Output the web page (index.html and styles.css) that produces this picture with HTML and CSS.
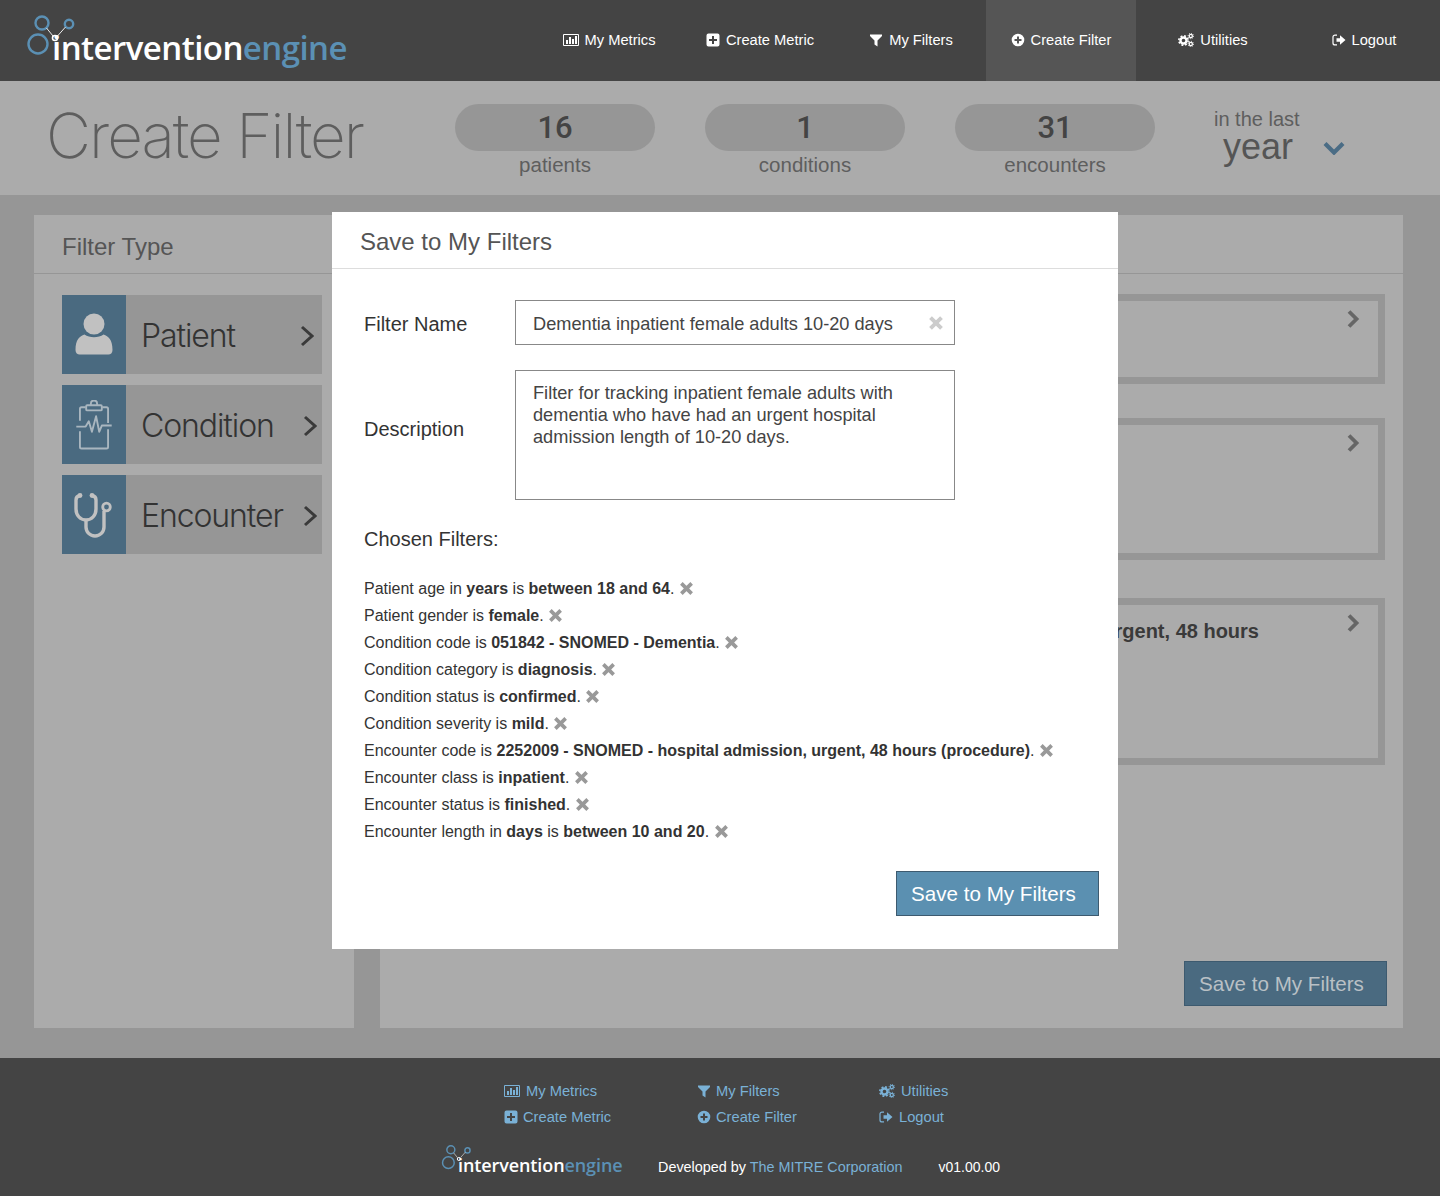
FILE: index.html
```html
<!DOCTYPE html>
<html lang="en">
<head>
  <meta charset="UTF-8">
  <title>Intervention Engine - Create Filter</title>
  <link rel="stylesheet" href="styles.css">
</head>
<body>

<svg class="sprites" width="0" height="0">
  <symbol id="i-metrics" viewBox="0 0 16 14"><path fill="none" stroke="currentColor" d="M.5 1.5h15v11H.5z"/><path fill="currentColor" d="M3 7h2v4H3zM6 4h2v7H6zM9 6h2v5H9zM12 3h2v8h-2z"/></symbol>
  <symbol id="i-plus-square" viewBox="0 0 14 14"><path fill="currentColor" fill-rule="evenodd" d="M2.500 .5h9a2 2 0 0 1 2 2v9a2 2 0 0 1-2 2h-9a2 2 0 0 1-2-2v-9a2 2 0 0 1 2-2zM6 3v3H3v2h3v3h2V8h3V6H8V3z"/></symbol>
  <symbol id="i-filter" viewBox="0 0 14 14"><path fill="currentColor" d="M1 1.500h12v1.500L8.500 7.500v6L5.500 11.500v-4L1 3z"/></symbol>
  <symbol id="i-plus-circle" viewBox="0 0 14 14"><path fill="currentColor" fill-rule="evenodd" d="M7 .7a6.300 6.300 0 1 1 0 12.600A6.300 6.300 0 0 1 7 .7zM6 3.500V6H3.500v2H6v2.500h2V8h2.500V6H8V3.500z"/></symbol>
  <symbol id="i-cogs" viewBox="0 0 16 14"><g fill="none" stroke="currentColor"><circle cx="5.500" cy="7.500" r="3" stroke-width="2.400"/><circle cx="5.500" cy="7.500" r="4.700" stroke-width="1.600" stroke-dasharray="1.900 1.800"/><circle cx="12.800" cy="3" r="1.600" stroke-width="1.300"/><circle cx="12.800" cy="3" r="2.700" stroke-width="1" stroke-dasharray="1 1.100"/><circle cx="12.800" cy="11" r="1.600" stroke-width="1.300"/><circle cx="12.800" cy="11" r="2.700" stroke-width="1" stroke-dasharray="1 1.100"/></g></symbol>
  <symbol id="i-logout" viewBox="0 0 14 14"><path fill="none" stroke="currentColor" stroke-width="1.200" d="M5 2.100H3A2 2 0 0 0 1 4.100v5.800a2 2 0 0 0 2 2h2"/><path fill="currentColor" d="M4.500 5.200H8V2.300L13.500 7 8 11.700V8.800H4.500z"/></symbol>
  <symbol id="i-x" viewBox="0 0 14 14"><path fill="none" stroke="currentColor" stroke-width="3.400" d="M2.200 2.200l9.600 9.600M11.800 2.200l-9.600 9.600"/></symbol>
  <symbol id="i-logo" viewBox="0 0 52 52"><g fill="none"><circle cx="16" cy="11" r="6.500" stroke-width="2.400" stroke="currentColor"/><circle cx="43" cy="12" r="4.200" stroke-width="2.400" stroke="currentColor"/><circle cx="12" cy="32" r="9.500" stroke-width="2.400" stroke="currentColor"/><path stroke="#fff" stroke-width=".9" d="M20.500 16l6.500 8M39.500 15l-8 9"/><circle cx="29" cy="26" r="2.500" stroke-width="1.600" stroke="#fff"/></g></symbol>
</svg>

<nav class="topnav">
  <a class="brand">
    <svg class="brand-mark"><use href="#i-logo"/></svg>
    <span class="brand-text">intervention<span class="brand-blue">engine</span></span>
  </a>
  <div class="menu">
    <a class="menu-item"><svg class="ico ico-wide"><use href="#i-metrics"/></svg>My Metrics</a>
    <a class="menu-item"><svg class="ico"><use href="#i-plus-square"/></svg>Create Metric</a>
    <a class="menu-item"><svg class="ico"><use href="#i-filter"/></svg>My Filters</a>
    <a class="menu-item active"><svg class="ico"><use href="#i-plus-circle"/></svg>Create Filter</a>
    <a class="menu-item"><svg class="ico ico-wide"><use href="#i-cogs"/></svg>Utilities</a>
    <a class="menu-item"><svg class="ico"><use href="#i-logout"/></svg>Logout</a>
  </div>
</nav>

<header class="page-head">
  <h1>Create Filter</h1>
  <div class="stat"><div class="pill">16</div><div class="stat-label">patients</div></div>
  <div class="stat"><div class="pill">1</div><div class="stat-label">conditions</div></div>
  <div class="stat"><div class="pill">31</div><div class="stat-label">encounters</div></div>
  <div class="period">
    <div class="period-small">in the last</div>
    <div class="period-big">year <svg class="period-arrow" viewBox="0 0 22 14"><path fill="none" stroke="currentColor" stroke-width="4.200" d="M2 2.500l9 9 9-9"/></svg></div>
  </div>
</header>

<main class="content">
  <section class="panel panel-left">
    <div class="panel-title">Filter Type</div>
    <div class="type-list">
      <div class="type-row">
        <div class="type-icon">
          <svg width="40" height="44" viewBox="0 0 40 44"><circle cx="20" cy="11" r="10.500" fill="#c1c1c1"/><path fill="#c1c1c1" d="M1.500 37c0-10 4-14 9-15.500 5 3.500 14 3.500 19 0 5 1.500 9 5.500 9 15.500 0 3-2 4.500-4 4.500H5.500c-2 0-4-1.500-4-4.500z"/></svg>
        </div>
        <span class="type-name">Patient</span>
        <svg class="type-arrow arrow-patient" viewBox="0 0 14 22"><path d="M2 2l10 9-10 9"/></svg>
      </div>
      <div class="type-row">
        <div class="type-icon">
          <svg width="38" height="50" viewBox="0 0 36 48" fill="none" stroke="#a9b6bf" stroke-width="1.800" stroke-linejoin="round"><path d="M10 7H6a1.500 1.500 0 0 0-1.500 1.500V20M26 7h4a1.500 1.500 0 0 1 1.500 1.500V22M4.500 30v15a1.500 1.500 0 0 0 1.500 1.500h24a1.500 1.500 0 0 0 1.500-1.500V28"/><path d="M11.500 5h13a1 1 0 0 1 1 1v3a1 1 0 0 1-1 1h-13a1 1 0 0 1-1-1V6a1 1 0 0 1 1-1zM15 5V3.500a3 3 0 0 1 6 0V5"/><path d="M1 25.500h9l3-5 3 10 4-15 3 15 2.500-6H35"/></svg>
        </div>
        <span class="type-name">Condition</span>
        <svg class="type-arrow" viewBox="0 0 14 22"><path d="M2 2l10 9-10 9"/></svg>
      </div>
      <div class="type-row">
        <div class="type-icon">
          <svg width="40" height="46" viewBox="0 0 40 46" fill="none" stroke="#c1c1c1" stroke-width="3.400"><path d="M6 3.500C3 4 2 5.500 2 8v9c0 6 4 11 10 11s10-5 10-11V8c0-2.500-1-4-4-4.500"/><circle cx="6" cy="3.500" r="2.400" fill="#c1c1c1" stroke="none"/><circle cx="18" cy="3.500" r="2.400" fill="#c1c1c1" stroke="none"/><path d="M12 28v7c0 5 4 9 9 9s9-4 9-9V19"/><circle cx="32.500" cy="15" r="3.800" stroke-width="2.800"/></svg>
        </div>
        <span class="type-name">Encounter</span>
        <svg class="type-arrow" viewBox="0 0 14 22"><path d="M2 2l10 9-10 9"/></svg>
      </div>
    </div>
  </section>

  <section class="panel panel-right">
    <div class="panel-title">&nbsp;</div>
    <div class="card card-a"><svg class="card-arrow" viewBox="0 0 14 20"><path d="M3 2.500l7.500 7.500L3 17.500"/></svg></div>
    <div class="card card-b"><svg class="card-arrow" viewBox="0 0 14 20"><path d="M3 2.500l7.500 7.500L3 17.500"/></svg></div>
    <div class="card card-c"><span class="card-text">hospital admission, urgent, 48 hours</span><svg class="card-arrow" viewBox="0 0 14 20"><path d="M3 2.500l7.500 7.500L3 17.500"/></svg></div>
    <div class="panel-foot"><button class="btn btn-dim">Save to My Filters</button></div>
  </section>
</main>

<footer class="footer">
  <div class="foot-links">
    <div class="foot-col foot-col-1">
      <a><svg class="ico ico-wide"><use href="#i-metrics"/></svg>My Metrics</a>
      <a><svg class="ico ico-tight"><use href="#i-plus-square"/></svg>Create Metric</a>
    </div>
    <div class="foot-col foot-col-2">
      <a><svg class="ico ico-tight"><use href="#i-filter"/></svg>My Filters</a>
      <a><svg class="ico ico-tight"><use href="#i-plus-circle"/></svg>Create Filter</a>
    </div>
    <div class="foot-col">
      <a><svg class="ico ico-wide"><use href="#i-cogs"/></svg>Utilities</a>
      <a><svg class="ico"><use href="#i-logout"/></svg>Logout</a>
    </div>
  </div>
  <div class="foot-info">
    <a class="foot-brand">
      <svg class="foot-mark"><use href="#i-logo"/></svg>
      <span>intervention<span class="foot-blue">engine</span></span>
    </a>
    <span class="foot-dev">Developed by <a>The MITRE Corporation</a></span>
    <span class="foot-ver">v01.00.00</span>
  </div>
</footer>

<div class="modal">
  <h2 class="modal-title">Save to My Filters</h2>
  <div class="modal-body">
    <div class="field">
      <label class="field-label">Filter Name</label>
      <div class="input">Dementia inpatient female adults 10-20 days<svg class="input-clear"><use href="#i-x"/></svg></div>
    </div>
    <div class="field field-desc">
      <label class="field-label">Description</label>
      <div class="input textarea">Filter for tracking inpatient female adults with dementia who have had an urgent hospital admission length of 10-20 days.</div>
    </div>
    <h3 class="chosen-title">Chosen Filters:</h3>
    <ul class="chosen">
      <li>Patient age in <b>years</b> is <b>between 18 and 64</b>. <svg class="x"><use href="#i-x"/></svg></li>
      <li>Patient gender is <b>female</b>. <svg class="x"><use href="#i-x"/></svg></li>
      <li>Condition code is <b>051842 - SNOMED - Dementia</b>. <svg class="x"><use href="#i-x"/></svg></li>
      <li>Condition category is <b>diagnosis</b>. <svg class="x"><use href="#i-x"/></svg></li>
      <li>Condition status is <b>confirmed</b>. <svg class="x"><use href="#i-x"/></svg></li>
      <li>Condition severity is <b>mild</b>. <svg class="x"><use href="#i-x"/></svg></li>
      <li>Encounter code is <b>2252009 - SNOMED - hospital admission, urgent, 48 hours (procedure)</b>. <svg class="x"><use href="#i-x"/></svg></li>
      <li>Encounter class is <b>inpatient</b>. <svg class="x"><use href="#i-x"/></svg></li>
      <li>Encounter status is <b>finished</b>. <svg class="x"><use href="#i-x"/></svg></li>
      <li>Encounter length in <b>days</b> is <b>between 10 and 20</b>. <svg class="x"><use href="#i-x"/></svg></li>
    </ul>
    <div class="modal-foot"><button class="btn">Save to My Filters</button></div>
  </div>
</div>

</body>
</html>
```

FILE: styles.css
```css
* {
  box-sizing: border-box;
}
body {
  margin: 0;
  height: 1196px;
  position: relative;
  overflow: hidden;
  background-color: #969696;
  font-family: "Liberation Sans", Arial, sans-serif;
  color: #333;
}
.sprites {
  position: absolute;
}
.ico {
  width: 14px;
  height: 14px;
  margin-right: 6px;
  flex: none;
}
.ico-wide {
  width: 16px;
}
.ico-tight {
  margin-right: 5px;
}

/* top nav */
.topnav {
  height: 81px;
  background-color: #444;
  display: flex;
  justify-content: space-between;
  padding-right: 2px;
}
.brand {
  position: relative;
  padding: 26px 0 0 52px;
}
.brand-mark {
  position: absolute;
  left: 26px;
  top: 12px;
  width: 52px;
  height: 52px;
  color: #5b90b4;
}
.brand-text {
  position: relative;
  font-family: "Open Sans", sans-serif;
  font-weight: 600;
  font-size: 33px;
  line-height: 44px;
  letter-spacing: -0.55px;
  color: #fff;
}
.brand-blue {
  color: #5b90b4;
}
.menu {
  display: grid;
  grid-template-columns: 150px 152px 150px 150px 154px 148px;
}
.menu-item {
  display: flex;
  align-items: center;
  justify-content: center;
  color: #fff;
  font-size: 14.7px;
  padding-bottom: 1px;
}
.menu-item.active {
  background-color: #555;
}

/* page header */
.page-head {
  height: 114px;
  background-color: #ababab;
  display: flex;
  align-items: flex-start;
  padding-top: 23px;
}
.page-head h1 {
  margin: 0 0 0 46px;
  width: 409px;
  font-family: Inter, sans-serif;
  font-weight: 200;
  font-size: 62px;
  line-height: 64px;
  letter-spacing: -2px;
  color: #5e5e5e;
}
.stat {
  width: 200px;
  margin-right: 50px;
  text-align: center;
}
.pill {
  height: 47px;
  border-radius: 24px;
  background-color: #969696;
  color: #444;
  font-family: Roboto, sans-serif;
  font-size: 31px;
  font-weight: 500;
  line-height: 48px;
}
.stat-label {
  font-size: 20.5px;
  line-height: 28px;
  color: #5e5e5e;
}
.period {
  margin-left: 9px;
  color: #5e5e5e;
}
.period-small {
  font-size: 20px;
  line-height: 20px;
  padding-top: 5px;
}
.period-big {
  font-size: 36px;
  line-height: 36px;
  color: #555;
  padding-left: 9px;
}
.period-arrow {
  width: 22px;
  height: 14px;
  margin-left: 20px;
  vertical-align: 4px;
  color: #4a6c85;
}

/* main */
.content {
  height: 863px;
  padding: 20px 37px 30px 34px;
  display: flex;
  gap: 26px;
}
.panel {
  background-color: #ababab;
  height: 813px;
}
.panel-left {
  width: 320px;
}
.panel-right {
  flex: 1;
  position: relative;
}
.panel-title {
  height: 59px;
  border-bottom: 1px solid #969696;
  padding: 17px 0 0 28px;
  font-size: 24px;
  line-height: 30px;
  color: #555;
}
.type-list {
  padding: 21px 32px 0 28px;
  display: flex;
  flex-direction: column;
  gap: 11px;
}
.type-row {
  height: 79px;
  background-color: #969696;
  display: flex;
  align-items: center;
}
.type-icon {
  width: 64px;
  height: 79px;
  background-color: #4a6a80;
  display: flex;
  align-items: center;
  justify-content: center;
  margin-right: 15px;
}
.type-name {
  flex: 1;
  padding-top: 2px;
  font-family: Inter, sans-serif;
  font-weight: 300;
  font-size: 32px;
  letter-spacing: -1.1px;
  color: #333;
}
.type-arrow {
  width: 14px;
  height: 22px;
  margin: 2px 5px 0 0;
}
.arrow-patient {
  margin-right: 8px;
}
.type-arrow path {
  fill: none;
  stroke: #3a3a3a;
  stroke-width: 3;
}
.card {
  position: absolute;
  left: 28px;
  right: 18px;
  border: 7px solid #969696;
  overflow: hidden;
}
.card-a {
  top: 79px;
  height: 90px;
}
.card-b {
  top: 203px;
  height: 142px;
}
.card-c {
  top: 383px;
  height: 167px;
}
.card-text {
  position: absolute;
  right: 119px;
  top: 15px;
  font-size: 20px;
  font-weight: bold;
  color: #3a3a3a;
  white-space: nowrap;
}
.card-arrow {
  position: absolute;
  right: 18px;
  top: 8px;
  width: 14px;
  height: 20px;
}
.card-arrow path {
  fill: none;
  stroke: #666;
  stroke-width: 3.800;
}
.panel-foot {
  position: absolute;
  right: 16px;
  bottom: 22px;
}
.btn {
  width: 203px;
  height: 45px;
  padding: 0 8px 0 0;
  border: 1px solid #3d5a6f;
  background-color: #5b90b1;
  color: #fff;
  font-family: inherit;
  font-size: 20.6px;
}
.btn-dim {
  background-color: #4a6a80;
  border-color: #3d5a6f;
  color: #b9c0c5;
}

/* footer */
.footer {
  height: 138px;
  background-color: #444;
  font-size: 14.7px;
  color: #fff;
  position: relative;
}
.foot-links {
  display: flex;
  padding: 24px 0 0 504px;
}
.foot-col {
  display: flex;
  flex-direction: column;
  gap: 8px;
}
.foot-col-1 {
  width: 193px;
}
.foot-col-2 {
  width: 182px;
}
.foot-col a {
  display: flex;
  align-items: center;
  height: 18px;
  color: #7ab1d6;
}
.foot-info {
  display: flex;
  align-items: center;
  position: absolute;
  left: 442px;
  top: 84px;
  font-size: 14.4px;
}
.foot-brand {
  width: 216px;
  position: relative;
  padding-left: 16px;
  font-family: "Open Sans", sans-serif;
  font-weight: 600;
  font-size: 18px;
  letter-spacing: -0.1px;
  line-height: 46px;
  padding-bottom: 3px;
}
.foot-mark {
  position: absolute;
  left: -1.500px;
  top: 1px;
  width: 32px;
  height: 32px;
  color: #5b90b4;
}
.foot-brand span {
  position: relative;
}
.foot-blue {
  color: #5b90b4;
}
.foot-dev {
  margin-right: 36px;
}
.foot-dev a {
  color: #7ab1d6;
}
.foot-ver {
  font-size: 14px;
}

/* modal over the dimmed page */
.modal {
  position: absolute;
  left: 332px;
  top: 212px;
  width: 786px;
  height: 737px;
  background-color: #fff;
}
.modal-title {
  margin: 0;
  height: 57px;
  border-bottom: 1px solid #ddd;
  padding: 15px 0 0 28px;
  font-size: 24px;
  font-weight: normal;
  line-height: 30px;
  color: #555;
}
.modal-body {
  padding: 31px 19px 0 32px;
}
.field {
  display: flex;
  align-items: center;
  margin-bottom: 25px;
}
.field-label {
  width: 151px;
  font-size: 20px;
  color: #333;
  padding-top: 3px;
}
.field-desc {
  align-items: flex-start;
}
.field-desc .field-label {
  padding-top: 48px;
}
.input {
  width: 440px;
  height: 45px;
  border: 1px solid #888;
  padding: 12px 40px 0 17px;
  font-size: 18.200px;
  line-height: 22px;
  color: #444;
  position: relative;
  white-space: nowrap;
}
.textarea {
  height: 130px;
  white-space: normal;
  padding: 11px 40px 0 17px;
}
.input-clear {
  position: absolute;
  right: 10px;
  top: 14px;
  width: 16px;
  height: 16px;
  color: #ccc;
}
.chosen-title {
  margin: 0;
  font-size: 20px;
  font-weight: normal;
  line-height: 28px;
  color: #333;
}
.chosen {
  list-style: none;
  margin: 22px 0 0;
  padding: 0;
  font-size: 16px;
  line-height: 27px;
  color: #333;
}
.x {
  width: 15px;
  height: 15px;
  vertical-align: -2px;
  color: #999;
}
.modal-foot {
  display: flex;
  justify-content: flex-end;
  margin-top: 26px;
}
```
